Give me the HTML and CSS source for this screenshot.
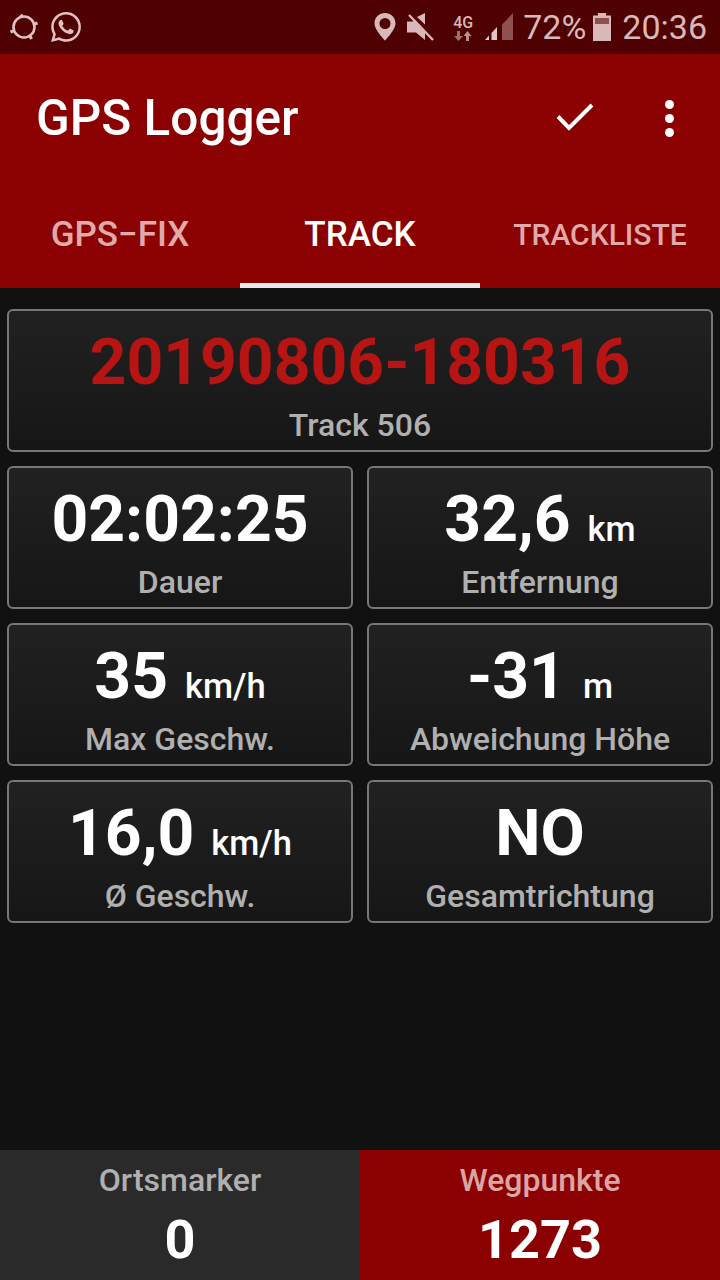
FILE: index.html
```html
<!DOCTYPE html>
<html lang="de">
<head>
    <meta charset="UTF-8">
    <meta name="viewport" content="width=device-width, initial-scale=1.0">
    <title>GPS Logger</title>
    <link rel="stylesheet" href="styles.css">
</head>
<body>
    <div class="status-bar">
        <div class="status-left">
            <svg class="icon-sync" width="32" height="32" viewBox="0 0 32 32">
                <circle cx="16" cy="16" r="10.5" fill="none" stroke="#e0c0c0" stroke-width="2.6"/>
                <path d="M13 3.5l1.5 3M29.5 12l-3.2 1.2M23.5 28l-1.5-3M2.5 21l3.2-1.2" fill="none" stroke="#e0c0c0" stroke-width="3"/>
            </svg>
            <svg class="icon-whatsapp" width="36" height="36" viewBox="0 0 24 24">
                <path fill="#e0c0c0" d="M12.04 2c-5.46 0-9.91 4.45-9.91 9.91 0 1.75.46 3.45 1.32 4.95L2.05 22l5.25-1.38c1.45.79 3.08 1.21 4.74 1.21 5.46 0 9.91-4.45 9.91-9.91 0-2.65-1.03-5.14-2.9-7.01A9.816 9.816 0 0 0 12.04 2m.01 1.67c2.2 0 4.26.86 5.82 2.42a8.225 8.225 0 0 1 2.41 5.83c0 4.54-3.7 8.23-8.24 8.23-1.48 0-2.93-.39-4.19-1.15l-.3-.17-3.12.82.83-3.04-.2-.32a8.188 8.188 0 0 1-1.26-4.38c.01-4.54 3.7-8.24 8.25-8.24M8.53 7.33c-.16 0-.43.06-.66.31-.22.25-.87.86-.87 2.07 0 1.22.89 2.39 1 2.56.14.17 1.76 2.67 4.25 3.73.59.27 1.05.42 1.41.53.59.19 1.13.16 1.56.1.48-.07 1.46-.6 1.67-1.18.21-.58.21-1.07.15-1.18-.07-.1-.23-.16-.48-.27-.25-.14-1.47-.74-1.69-.82-.23-.08-.37-.12-.56.12-.16.25-.64.81-.78.97-.15.17-.29.19-.53.07-.26-.13-1.06-.39-2-1.23-.74-.66-1.23-1.47-1.38-1.72-.12-.24-.01-.39.11-.5.11-.11.27-.29.37-.44.13-.14.17-.25.25-.41.08-.17.04-.31-.02-.43-.06-.11-.56-1.35-.77-1.84-.2-.48-.4-.42-.56-.43-.14 0-.3-.01-.47-.01z"/>
            </svg>
        </div>
        <div class="status-right">
            <svg class="icon-pin" width="22" height="28" viewBox="0 0 22 28">
                <path fill-rule="evenodd" fill="#d8b8b8" d="M11 0C5 0 .5 4.600.5 10.500.5 17 11 27.500 11 27.500S21.500 17 21.500 10.500C21.500 4.600 17 0 11 0zm0 5a5.500 5.500 0 1 1 0 11 5.500 5.500 0 0 1 0-11z"/>
            </svg>
            <svg class="icon-mute" width="28" height="28" viewBox="0 0 28 28">
                <path fill="#d8b8b8" d="M0 8.500h6L8 7l10 10.500V27l-9-7.500H0zM18 0v11.500L10 4z"/>
                <path d="M2 2l24 25" stroke="#d8b8b8" stroke-width="2.400"/>
            </svg>
            <div class="net">
                <span class="net-label">4G</span>
                <svg width="18" height="10" viewBox="0 0 18 10">
                    <path fill="#9a7070" d="M3 10V5H0l4.500-5L9 5H6v5z" transform="rotate(180 4.500 5)"/>
                    <path fill="#b89090" d="M12 10V5H9.500l4-5 4 5H15v5z"/>
                </svg>
            </div>
            <svg class="icon-signal" width="28" height="28" viewBox="0 0 28 28">
                <path fill="#8f5050" d="M17 11.500L28 0v27H17z"/>
                <path fill="#e0c8c8" d="M0 27l4-4.500V27zM6.500 20L12 14v13H6.500z"/>
            </svg>
            <span class="status-text battery-text">72%</span>
            <svg class="icon-battery" width="18" height="28" viewBox="0 0 18 28">
                <path fill="#d8b8b8" d="M5 0h8v2.500h5V28H0V2.500h5z"/>
                <rect x="2" y="5" width="14" height="6" fill="#8f5050"/>
            </svg>
            <span class="status-text">20:36</span>
        </div>
    </div>

    <header class="toolbar">
        <div class="toolbar-top">
            <h1>GPS Logger</h1>
            <svg class="icon-check" width="40" height="30" viewBox="0 0 40 30">
                <path d="M2 13.500L13 25 36 2" fill="none" stroke="#fff" stroke-width="4"/>
            </svg>
            <div class="menu-dots"><i></i><i></i><i></i></div>
        </div>
        <nav class="tabs">
            <a href="#">GPS&#8722;FIX</a>
            <a href="#" class="active">TRACK</a>
            <a href="#" class="small">TRACKLISTE</a>
        </nav>
    </header>

    <main class="content">
        <div class="tile wide">
            <div class="value red">20190806-180316</div>
            <div class="label">Track 506</div>
        </div>
        <div class="tile">
            <div class="value">02:02:25</div>
            <div class="label">Dauer</div>
        </div>
        <div class="tile">
            <div class="value">32,6<span class="unit">km</span></div>
            <div class="label">Entfernung</div>
        </div>
        <div class="tile">
            <div class="value">35<span class="unit">km/h</span></div>
            <div class="label">Max Geschw.</div>
        </div>
        <div class="tile">
            <div class="value">-31<span class="unit">m</span></div>
            <div class="label">Abweichung Höhe</div>
        </div>
        <div class="tile">
            <div class="value">16,0<span class="unit">km/h</span></div>
            <div class="label">Ø Geschw.</div>
        </div>
        <div class="tile">
            <div class="value">NO</div>
            <div class="label">Gesamtrichtung</div>
        </div>
    </main>

    <footer class="bottom">
        <div class="counter">
            <div class="counter-label">Ortsmarker</div>
            <div class="counter-value">0</div>
        </div>
        <div class="counter on">
            <div class="counter-label">Wegpunkte</div>
            <div class="counter-value">1273</div>
        </div>
    </footer>
</body>
</html>
```

FILE: styles.css
```css
body {
    font-family: Roboto, sans-serif;
    margin: 0;
    padding: 0;
    height: 1280px;
    overflow: hidden;
    display: flex;
    flex-direction: column;
    background-color: #111;
    color: #fff;
}
.status-bar {
    height: 54px;
    background-color: #4f0000;
    display: flex;
    justify-content: space-between;
    align-items: center;
    color: #d8b8b8;
}
.status-left {
    display: flex;
    align-items: center;
    margin-left: 8px;
    gap: 8px;
}
.status-right {
    display: flex;
    align-items: center;
    margin-right: 13px;
}
.status-text {
    font-size: 34px;
    line-height: 54px;
}
.icon-pin {
    margin-right: 11px;
}
.icon-mute {
    margin-right: 18px;
}
.net {
    display: flex;
    flex-direction: column;
    align-items: center;
    margin-right: 12px;
}
.net-label {
    font-size: 16px;
    font-weight: 500;
    line-height: 17px;
}
.icon-signal {
    margin-right: 10px;
}
.battery-text {
    margin-right: 7px;
}
.icon-battery {
    margin-right: 11px;
}
.toolbar {
    height: 234px;
    background-color: #8b0000;
    display: flex;
    flex-direction: column;
    justify-content: space-between;
}
.toolbar-top {
    height: 128px;
    display: flex;
    align-items: center;
    padding-left: 36px;
}
.toolbar-top h1 {
    margin: 0;
    flex: 1;
    font-size: 49.5px;
    font-weight: 500;
}
.icon-check {
    margin-right: 69px;
}
.menu-dots {
    display: flex;
    flex-direction: column;
    gap: 5px;
    margin-right: 46px;
}
.menu-dots i {
    display: block;
    width: 9px;
    height: 9px;
    border-radius: 50%;
    background-color: #fff;
}
.tabs {
    height: 96px;
    display: flex;
}
.tabs a {
    flex: 1;
    display: flex;
    align-items: center;
    justify-content: center;
    box-sizing: border-box;
    padding-bottom: 6px;
    font-size: 35px;
    font-weight: 500;
    color: #e0aaaa;
    text-decoration: none;
    border-bottom: 5px solid transparent;
}
.tabs a.active {
    color: #fff;
    border-bottom-color: #e8e8e8;
}
.tabs a.small {
    font-size: 30px;
}
.content {
    flex: 1;
    display: grid;
    grid-template-columns: 346px 346px;
    grid-auto-rows: 143px;
    gap: 14px;
    padding: 21px 7px 0;
    align-content: start;
}
.tile {
    box-sizing: border-box;
    border: 2px solid #777;
    border-radius: 6px;
    background: linear-gradient(#212121, #161616);
    display: flex;
    flex-direction: column;
    align-items: center;
}
.tile.wide {
    grid-column: 1 / 3;
}
.value {
    font-size: 64.2px;
    font-weight: 700;
    line-height: 64px;
    margin-top: 19px;
    white-space: nowrap;
}
.value.red {
    color: #b71414;
}
.unit {
    font-size: 34.5px;
    font-weight: 500;
    line-height: 0;
    margin-left: 17px;
}
.label {
    font-size: 32px;
    font-weight: 500;
    line-height: 38px;
    margin-top: 12px;
    color: #b0b0b0;
}
.bottom {
    height: 130px;
    display: flex;
}
.counter {
    flex: 1;
    background-color: #2a2a2a;
    text-align: center;
}
.counter.on {
    background-color: #8b0000;
}
.counter-label {
    font-size: 32px;
    font-weight: 500;
    line-height: 38px;
    margin-top: 11px;
    color: #b0b0b0;
}
.counter.on .counter-label {
    color: #dca5a5;
}
.counter-value {
    font-size: 54px;
    font-weight: 700;
    line-height: 60px;
    margin-top: 11px;
}
```
